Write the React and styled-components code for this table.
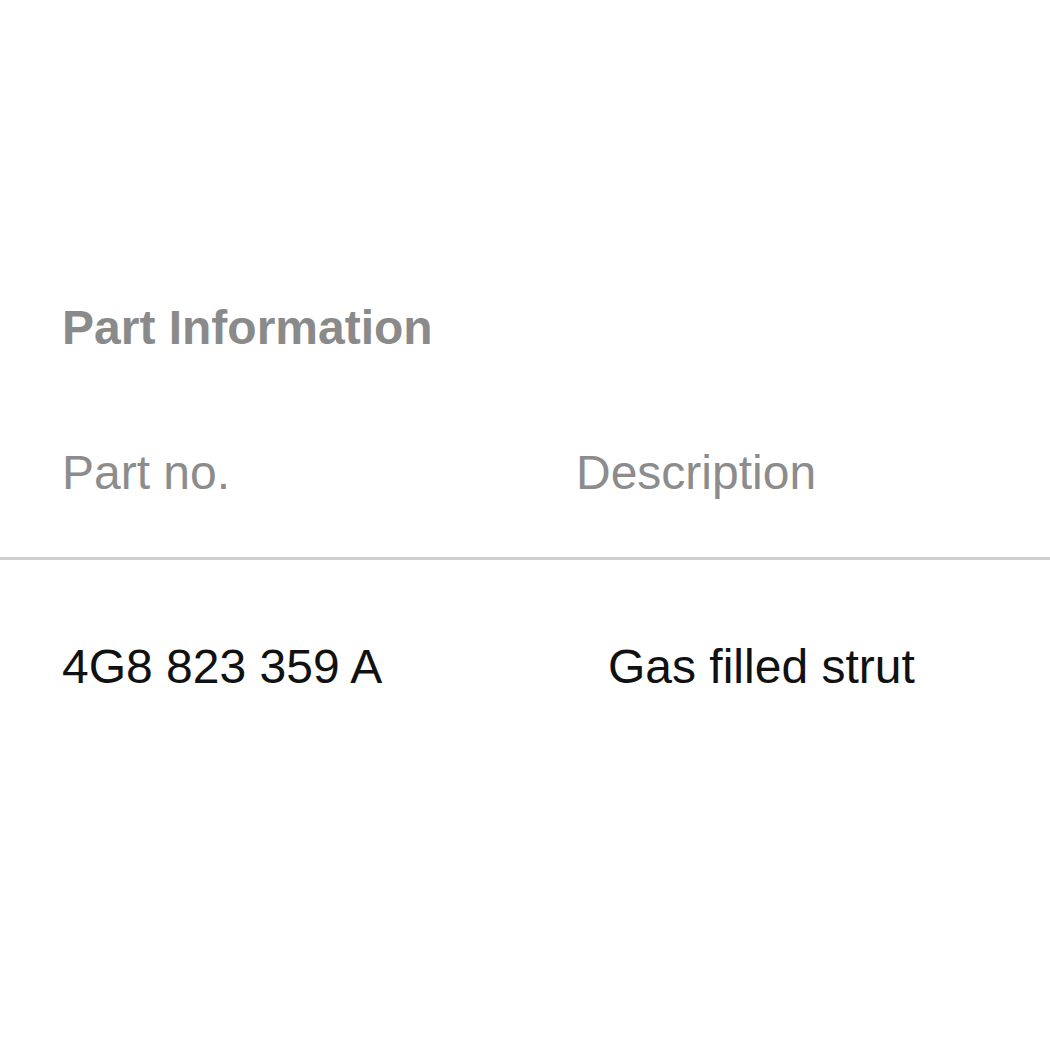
import React from "react";
import styled, { createGlobalStyle } from "styled-components";

const Global = createGlobalStyle`
  html, body { margin: 0; padding: 0; background: #ffffff; }
  body { font-family: "Liberation Sans", Arial, sans-serif; }
`;

const Page = styled.div`
  width: 1050px;
  height: 1050px;
  background: #ffffff;
  padding-top: 304px;
  box-sizing: border-box;
`;

const Title = styled.h2`
  margin: 0;
  padding-left: 62px;
  font-size: 48px;
  line-height: 48px;
  font-weight: 700;
  color: #8a8a8a;
`;

const Row = styled.div`
  display: grid;
  grid-template-columns: 514px 1fr;
  padding-left: 62px;
  font-size: 48px;
  line-height: 48px;
`;

const HeaderRow = styled(Row)`
  margin-top: 97px;
  padding-bottom: 60px;
  border-bottom: 3px solid #cfcfcf;
  color: #8c8c8c;
`;

const DataRow = styled(Row)`
  margin-top: 83px;
  color: #111111;
`;

const Cell = styled.div`
  padding-left: ${(p) => (p.$inset ? "32px" : "0")};
  white-space: nowrap;
`;

export default function App() {
  return (
    <>
      <Global />
      <Page>
        <Title>Part Information</Title>
        <HeaderRow>
          <Cell>Part no.</Cell>
          <Cell>Description</Cell>
        </HeaderRow>
        <DataRow>
          <Cell>4G8 823 359 A</Cell>
          <Cell $inset>Gas filled strut</Cell>
        </DataRow>
      </Page>
    </>
  );
}
